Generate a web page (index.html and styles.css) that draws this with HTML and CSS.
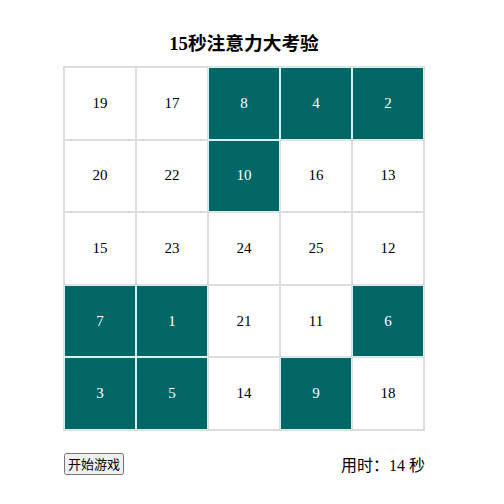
FILE: index.html
```html
<!DOCTYPE html>
<html lang="zh">
<head>
    <meta charset="UTF-8">
    <meta name="viewport" content="width=device-width, initial-scale=1.0">
    <title>15秒注意力大考验</title>
    <link rel="stylesheet" href="styles.css">
</head>
<body>

<div class="game">
    <h3>15秒注意力大考验</h3>
    <table class="board">
        <tr>
            <td>19</td><td>17</td><td class="on">8</td><td class="on">4</td><td class="on">2</td>
        </tr>
        <tr>
            <td>20</td><td>22</td><td class="on">10</td><td>16</td><td>13</td>
        </tr>
        <tr>
            <td>15</td><td>23</td><td>24</td><td>25</td><td>12</td>
        </tr>
        <tr>
            <td class="on">7</td><td class="on">1</td><td>21</td><td>11</td><td class="on">6</td>
        </tr>
        <tr>
            <td class="on">3</td><td class="on">5</td><td>14</td><td class="on">9</td><td>18</td>
        </tr>
    </table>
    <div class="footer">
        <button type="button">开始游戏</button>
        <span class="timer">用时：14 秒</span>
    </div>
</div>

</body>
</html>
```

FILE: styles.css
```css
body {
    margin: 8px;
    font-family: "Liberation Serif", "Noto Sans CJK SC", serif;
    color: #000;
    background: #fff;
}
.game {
    width: 362px;
    margin-left: 55px;
}
.game h3 {
    margin: 24px 0 10px;
    font-size: 18.72px;
    line-height: 24px;
    text-align: center;
    font-weight: bold;
}
.board {
    width: 362px;
    border-collapse: separate;
    border-spacing: 0;
    border: 1px solid #ddd;
    table-layout: fixed;
}
.board td {
    height: 70.6px;
    padding: 0;
    border: 1px solid #ddd;
    text-align: center;
    font-size: 15px;
}
.board td.on {
    background-color: #006666;
    border-color: #d4f4f4;
    color: #fff;
}
.footer {
    display: flex;
    justify-content: space-between;
    align-items: center;
    margin-top: 21px;
}
.footer button {
    font-family: "Noto Sans CJK SC", sans-serif;
    font-size: 13px;
    padding: 0 2px;
    line-height: 18px;
    margin-left: 1px;
}
.timer {
    font-size: 16px;
}
```
